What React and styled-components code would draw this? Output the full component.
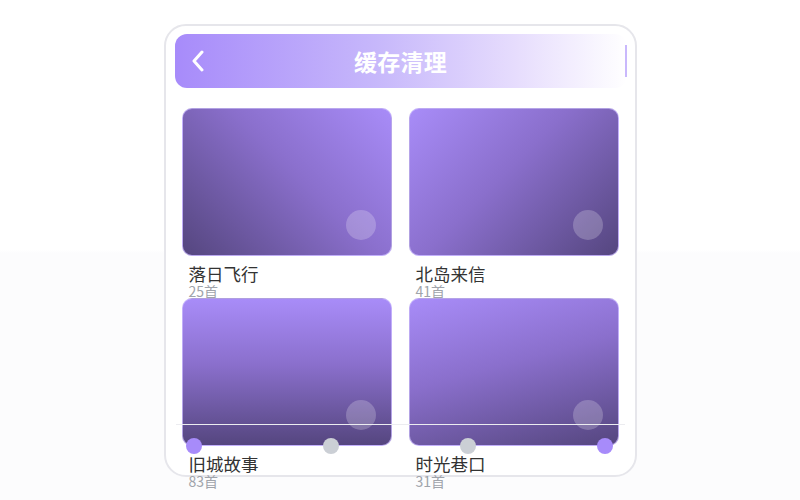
import React from "react";
import styled, { createGlobalStyle } from "styled-components";

const Global = createGlobalStyle`
  html, body { margin: 0; padding: 0; }
  body {
    width: 800px;
    height: 500px;
    overflow: hidden;
    background: linear-gradient(to bottom, #ffffff 0, #ffffff 250px, #fcfcfd 253px, #fcfcfd 100%);
    font-family: "Noto Sans CJK SC", "Noto Sans", sans-serif;
  }
`;

const Page = styled.div`
  display: flex;
  justify-content: center;
  padding-top: 24px;
`;

const Frame = styled.div`
  position: relative;
  width: 473px;
  height: 453px;
  border: 2px solid #e6e6eb;
  border-radius: 22px;
  background: #ffffff;
  padding: 8px 8px 0 9px;
  box-sizing: border-box;
`;

const Header = styled.div`
  position: relative;
  height: 54px;
  border-radius: 12px;
  background: linear-gradient(90deg, #a78bfa 0%, #c7b8fb 45%, #e6dcfd 75%, #ffffff 100%);
  display: flex;
  align-items: center;
  justify-content: center;

  &::after {
    content: "";
    position: absolute;
    right: 0;
    top: 11px;
    bottom: 11px;
    width: 1.5px;
    background: #c9b8fc;
  }
`;

const Back = styled.button`
  position: absolute;
  left: 16px;
  top: 50%;
  transform: translateY(-50%);
  background: none;
  border: none;
  padding: 0;
  display: flex;
`;

const Title = styled.h1`
  margin: 0;
  color: #ffffff;
  font-size: 23px;
  font-weight: 700;
  letter-spacing: 0.3px;
`;

const Grid = styled.div`
  display: grid;
  grid-template-columns: 210px 210px;
  grid-auto-rows: 180px;
  column-gap: 17px;
  row-gap: 10px;
  justify-content: center;
  margin-top: 20px;
  padding-right: 1px;
`;

const Item = styled.div`
  display: flex;
  flex-direction: column;
  min-height: 0;
`;

const Cover = styled.div`
  position: relative;
  height: 148px;
  flex-shrink: 0;
  border-radius: 10px;
  box-sizing: border-box;
  border: 1px solid rgba(205, 190, 255, 0.75);
  background: linear-gradient(${(p) => p.$angle}deg, #a88cf8 0%, #8a6fcc 45%, #55467f 100%);
`;

const PlayDot = styled.span`
  position: absolute;
  right: 15px;
  bottom: 15px;
  width: 30px;
  height: 30px;
  border-radius: 50%;
  background: rgba(255, 255, 255, 0.22);
`;

const Name = styled.div`
  margin: 8px 0 0 7px;
  font-size: 17.5px;
  line-height: 20px;
  color: #333333;
`;

const Count = styled.div`
  margin-left: 7px;
  font-size: 14px;
  line-height: 15px;
  color: #a0a4ab;
`;

const Track = styled.div`
  position: absolute;
  left: 10px;
  right: 10px;
  top: 398px;
  height: 1px;
  background: #ececf0;
`;

const Dots = styled.div`
  position: absolute;
  left: 20px;
  right: 21px;
  top: 412px;
  display: flex;
  justify-content: space-between;
`;

const Dot = styled.span`
  width: 16px;
  height: 16px;
  border-radius: 50%;
  background: ${(p) => (p.$active ? "#a78bfa" : "#cbcfd5")};
`;

const albums = [
  { name: "落日飞行", count: "25首", angle: 225 },
  { name: "北岛来信", count: "41首", angle: 135 },
  { name: "旧城故事", count: "83首", angle: 180 },
  { name: "时光巷口", count: "31首", angle: 165 },
];

export default function App() {
  return (
    <>
      <Global />
      <Page>
        <Frame>
          <Header>
            <Back aria-label="back">
              <svg width="14" height="22" viewBox="0 0 14 22" fill="none">
                <polyline points="11,2 3,11 11,20" stroke="#ffffff" strokeWidth="3" strokeLinecap="round" strokeLinejoin="round" />
              </svg>
            </Back>
            <Title>缓存清理</Title>
          </Header>
          <Grid>
            {albums.map((a) => (
              <Item key={a.name}>
                <Cover $angle={a.angle}>
                  <PlayDot />
                </Cover>
                <Name>{a.name}</Name>
                <Count>{a.count}</Count>
              </Item>
            ))}
          </Grid>
          <Track />
          <Dots>
            <Dot $active />
            <Dot />
            <Dot />
            <Dot $active />
          </Dots>
        </Frame>
      </Page>
    </>
  );
}
